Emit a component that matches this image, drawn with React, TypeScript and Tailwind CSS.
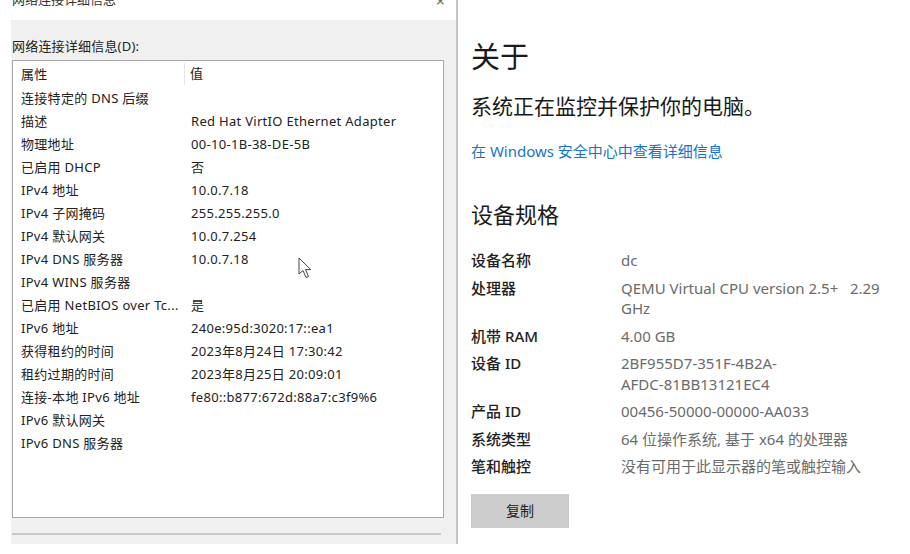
import React from "react";

/**
 * Network connection details dialog (left) + Windows "About" settings page (right).
 */

const FONT = { fontFamily: '"Noto Sans", "Noto Sans CJK SC", sans-serif' };

const DETAILS: [string, string][] = [
  ["连接特定的 DNS 后缀", ""],
  ["描述", "Red Hat VirtIO Ethernet Adapter"],
  ["物理地址", "00-10-1B-38-DE-5B"],
  ["已启用 DHCP", "否"],
  ["IPv4 地址", "10.0.7.18"],
  ["IPv4 子网掩码", "255.255.255.0"],
  ["IPv4 默认网关", "10.0.7.254"],
  ["IPv4 DNS 服务器", "10.0.7.18"],
  ["IPv4 WINS 服务器", ""],
  ["已启用 NetBIOS over Tc...", "是"],
  ["IPv6 地址", "240e:95d:3020:17::ea1"],
  ["获得租约的时间", "2023年8月24日 17:30:42"],
  ["租约过期的时间", "2023年8月25日 20:09:01"],
  ["连接-本地 IPv6 地址", "fe80::b877:672d:88a7:c3f9%6"],
  ["IPv6 默认网关", ""],
  ["IPv6 DNS 服务器", ""],
];

const SPECS: [string, string[]][] = [
  ["设备名称", ["dc"]],
  ["处理器", ["QEMU Virtual CPU version 2.5+\u00a0\u00a0\u00a02.29", "GHz"]],
  ["机带 RAM", ["4.00 GB"]],
  ["设备 ID", ["2BF955D7-351F-4B2A-", "AFDC-81BB13121EC4"]],
  ["产品 ID", ["00456-50000-00000-AA033"]],
  ["系统类型", ["64 位操作系统, 基于 x64 的处理器"]],
  ["笔和触控", ["没有可用于此显示器的笔或触控输入"]],
];

function Cursor() {
  return (
    <svg
      className="absolute left-[298px] top-[257px]"
      width="16"
      height="22"
      viewBox="0 0 16 22"
    >
      <path
        d="M1 1 L1 17 L5 13.5 L8 20.5 L10.5 19.5 L7.6 12.6 L12.8 12.6 Z"
        fill="#fff"
        stroke="#444"
        strokeWidth="1"
        strokeLinejoin="round"
      />
    </svg>
  );
}

function DetailsDialog() {
  return (
    <div className="relative flex w-[456px] shrink-0 flex-col bg-white">
      {/* Title bar, cut off at the top */}
      <div className="relative h-[20px] overflow-hidden">
        <div className="-mt-[11px] pl-[12px] text-[13px] leading-[20px] text-[#333]">
          网络连接详细信息
        </div>
        <div className="absolute right-[11px] -top-[11px] text-[16px] text-[#666]">×</div>
      </div>

      {/* Client area */}
      <div className="ml-[11px] flex h-[524px] flex-col bg-[#f0f0f0]">
        <div className="pt-[17px] pl-[1px] text-[13px] leading-[18px] tracking-[0.2px] text-[#222]">
          网络连接详细信息(D):
        </div>

        <div className="mt-[5px] ml-[1px] h-[458px] w-[432px] border border-[#a9a9a9] bg-white text-[13px] tracking-[0.3px] text-[#222]">
          <div className="flex h-[26px] items-center">
            <div className="w-[172px] border-r border-[#e5e5e5] pl-[8px] leading-[22px]">属性</div>
            <div className="pl-[5px]">值</div>
          </div>
          {DETAILS.map(([k, v]) => (
            <div key={k} className="flex h-[23px] items-center">
              <div className="w-[172px] whitespace-nowrap pl-[8px]">{k}</div>
              <div className="whitespace-nowrap pl-[6px]">{v}</div>
            </div>
          ))}
        </div>

        <div className="mt-[15px] ml-[1px] h-[2px] w-[429px] bg-[#c8c8c8]" />
      </div>

      <Cursor />
    </div>
  );
}

function AboutPage() {
  return (
    <div className="flex flex-1 flex-col pl-[13px] pt-[38px] text-[#1a1a1a]">
      <h1 className="text-[29px] leading-[38px]">关于</h1>
      <p className="mt-[16px] text-[21px] leading-[28px]">系统正在监控并保护你的电脑。</p>
      <a className="mt-[21px] text-[15px] leading-[20px] text-[#1a73c8]">
        在 Windows 安全中心中查看详细信息
      </a>

      <h2 className="mt-[38px] text-[22px] leading-[30px]">设备规格</h2>

      <div className="mt-[21px] flex flex-col gap-y-[7px] text-[15px] leading-[20.5px]">
        {SPECS.map(([k, lines]) => (
          <div key={k} className="flex">
            <div className="w-[150px] shrink-0 font-medium text-[#222]">{k}</div>
            <div className="text-[#6b6b6b]">
              {lines.map((l) => (
                <div key={l} className="whitespace-nowrap">
                  {l}
                </div>
              ))}
            </div>
          </div>
        ))}
      </div>

      <button className="mt-[17px] h-[34px] w-[98px] bg-[#cccccc] text-[14px] text-[#222]">
        复制
      </button>
    </div>
  );
}

export default function App() {
  return (
    <div style={FONT} className="flex h-[554px] w-[910px] overflow-hidden bg-white">
      <DetailsDialog />
      <div className="h-[544px] w-[2px] shrink-0 bg-[#c4c4c4]" />
      <AboutPage />
    </div>
  );
}
